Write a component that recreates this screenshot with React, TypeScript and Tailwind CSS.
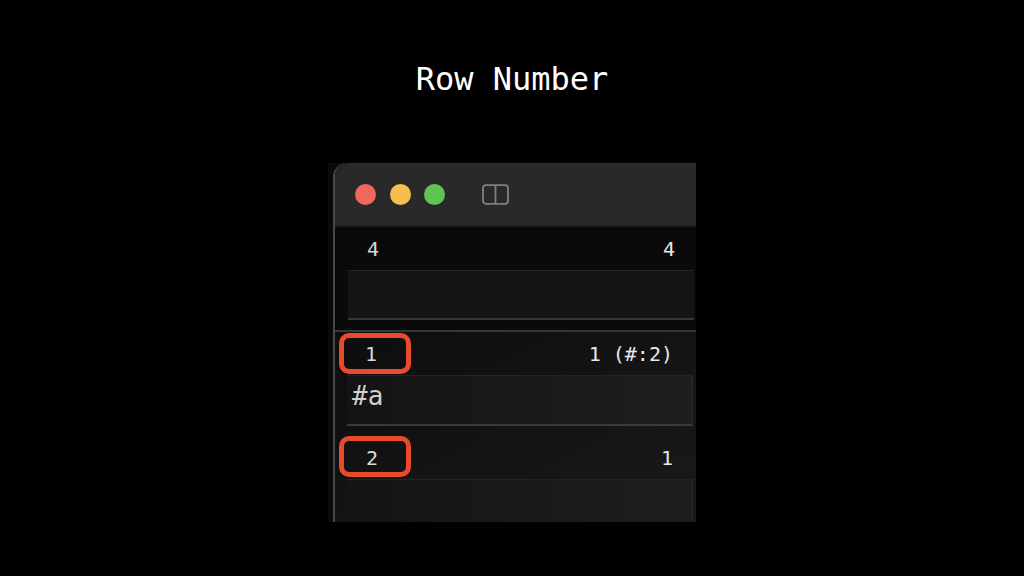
import React from "react";

const mono = "font-['DejaVu_Sans_Mono',monospace]";

function TitleBar() {
  return (
    <div className="h-[64px] shrink-0 flex items-center gap-[13.5px] pl-[20px] bg-[#292929] border-b-2 border-[#1c1c1c] rounded-tl-[14px] border-t border-t-[#303030]">
      <div className="w-[21px] h-[21px] rounded-full bg-[#f1675e]" />
      <div className="w-[21px] h-[21px] rounded-full bg-[#f6bd4f]" />
      <div className="w-[21px] h-[21px] rounded-full bg-[#5fc454]" />
      {/* sidebar toggle */}
      <svg className="ml-[23px]" width="27" height="21" viewBox="0 0 27 21" fill="none" stroke="#808080" strokeWidth="1.8">
        <rect x="1" y="1.2" width="25" height="18.6" rx="3" />
        <line x1="13.5" y1="1.2" x2="13.5" y2="19.8" />
      </svg>
    </div>
  );
}

function Row({
  left,
  right,
  field,
  boxClass,
  headerClass,
  fieldClass,
}: {
  left: string;
  right: string;
  field?: string;
  boxClass?: string;
  headerClass: string;
  fieldClass: string;
}) {
  return (
    <div>
      <div className={`relative flex items-center justify-between text-[20px] leading-none ${headerClass}`}>
        <span className="text-[#d8d8d8]">{left}</span>
        <span className="text-[#e8e8e8]">{right}</span>
        {boxClass && (
          <div className={`absolute left-[4px] w-[72px] h-[41px] rounded-[10px] border-[5px] border-[#ea4a2c] ${boxClass}`} />
        )}
      </div>
      <div
        className={`border-t border-[#242424] text-[26px] leading-none text-[#cfcfcf] bg-gradient-to-r from-[#141414] to-[#1e1e1e] ${fieldClass}`}
      >
        {field}
      </div>
    </div>
  );
}

export default function App() {
  return (
    <div className={`w-[1024px] h-[576px] overflow-hidden bg-black flex flex-col items-center ${mono}`}>
      <h1 className="mt-[59px] h-[40px] text-[32px] leading-[40px] font-normal text-white">Row Number</h1>
      <div className="mt-[64px] w-[368px] h-[359px] flex bg-[#0a0a0a]">
        <div className="w-[5px] shrink-0" />
        <div className="flex-1 flex flex-col border-l-2 border-[#484848] rounded-tl-[14px] overflow-hidden">
          <TitleBar />
          <div className="flex-1 bg-[#0a0a0a] flex flex-col">
            <div className="h-[105px] shrink-0 border-b-2 border-[#363636]">
              <Row
                left="4"
                right="4"
                headerClass="h-[43px] pl-[32px] pr-[21px]"
                fieldClass="h-[50px] ml-[13px] mr-[2px] !border-b-2 border-b-[#383838] !from-[#151515] !to-[#151515]"
              />
            </div>
            <div className="flex-1 bg-gradient-to-br from-[#0d0d0d] to-[#1a1a1a]">
              <Row
                left="1"
                right="1 (#:2)"
                boxClass="top-[1px]"
                headerClass="h-[43px] pl-[30px] pr-[23px]"
                fieldClass="h-[51px] ml-[12px] mr-[3px] pl-[5px] pt-[7px] !border-b-2 border-b-[#3a3a3a] border-r border-r-[#2a2a2a]"
                field="#a"
              />
              <Row
                left="2"
                right="1"
                boxClass="top-[10px]"
                headerClass="h-[53px] pl-[31px] pr-[23px] pt-[10px]"
                fieldClass="h-[43px] ml-[12px] mr-[3px] border-r border-r-[#2a2a2a]"
              />
            </div>
          </div>
        </div>
      </div>
    </div>
  );
}
